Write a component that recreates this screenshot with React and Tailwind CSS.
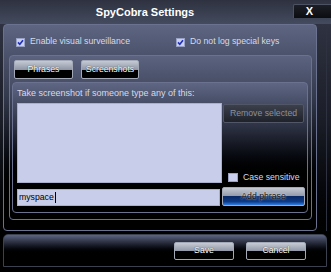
import React from "react";

function Check({ checked, w = "w-[9px]", h = "h-[9px]" }) {
  return (
    <div className={`${w} ${h} shrink-0 bg-[#c9cfec] border border-[#9aa2c4] flex items-center justify-center`}>
      {checked && (
        <svg width="7" height="7" viewBox="0 0 7 7">
          <path d="M1 3.4 L2.8 5.3 L6 1.3" fill="none" stroke="#1f2fbf" strokeWidth="1.6" />
        </svg>
      )}
    </div>
  );
}

function Btn({ children, className = "" }) {
  return (
    <div
      className={`flex items-center justify-center rounded-[2px] border border-[#a3a9b6] bg-[linear-gradient(to_bottom,#c5cad4_0%,#9197a7_50%,#000_50%,#000_100%)] text-white text-[8.7px] [text-shadow:0_0_1px_#000] ${className}`}
    >
      {children}
    </div>
  );
}

export default function App() {
  return (
    <div className="relative w-[331px] h-[272px] overflow-hidden bg-linear-to-b from-[#343848] via-[#1a1d26] via-45% to-black font-['Liberation_Sans',Arial,sans-serif]">
      {/* title bar */}
      <div className="flex h-[24px] bg-linear-to-b from-[#2e3240] to-[#444b5f]">
        <div className="flex-1 flex items-center justify-center pr-[3px] text-white font-bold text-[11px]">
          SpyCobra Settings
        </div>
        <div className="mt-[4px] w-[38px] h-[14px] rounded-tl-[2px] border-t border-l border-[#4c5262] bg-linear-to-b from-[#1c1f27] to-[#0c0d11] flex items-center justify-center pr-[6px] text-white font-bold text-[11px]">
          X
        </div>
      </div>

      {/* main panel */}
      <div className="flex">
        <div className="ml-[3px] w-[314px] h-[207px] rounded-[4px] border border-[#6a7290] bg-linear-to-b from-[#5d6582] via-[#343a4d] via-35% to-black to-85%">
          <div className="pt-[12px] pl-[12px] flex items-center h-[22px] text-[8.7px] text-[#d6dae6]">
            <div className="w-[160px] flex items-center gap-[5px]">
              <Check checked />
              <span>Enable visual surveillance</span>
            </div>
            <div className="flex items-center gap-[5px]">
              <Check checked />
              <span>Do not log special keys</span>
            </div>
          </div>

          {/* group */}
          <div className="ml-[5px] mt-[8px] w-[303px] h-[165px] rounded-[4px] border border-[#6a7290] bg-linear-to-b from-[#5b6380] via-[#2e3344] via-40% to-black to-85%">
            <div className="pt-[4px] pl-[4px] flex gap-[8px]">
              <Btn className="w-[59px] h-[19px]">Phrases</Btn>
              <Btn className="w-[58px] h-[19px]">Screenshots</Btn>
            </div>

            <div className="mt-[3px] ml-[2px] w-[296px] h-[131px] rounded-[4px] border border-[#6a7290] bg-linear-to-b from-[#5e6684] via-[#2b3041] via-35% to-black to-75% pl-[4px]">
              <div className="h-[20px] leading-[20px] text-[9px] text-[#d6dae6]">
                Take screenshot if someone type any of this:
              </div>
              <div className="flex">
                <div className="w-[205px] h-[80px] bg-[#c8cde9] border border-[#aab0cc]" />
                <div className="ml-[1px] w-[82px] flex flex-col">
                  <div className="mt-[1px] w-[81px] h-[19px] rounded-[2px] border border-[#515767] bg-linear-to-b from-[#3c404c] to-[#1f2229] flex items-center justify-center text-[8.7px] text-[#8b909c]">
                    Remove selected
                  </div>
                  <div className="mt-[48px] ml-[5px] flex items-center gap-[5px] text-[8.7px] text-[#d6dae6]">
                    <Check w="w-[10px]" h="h-[9px]" />
                    <span>Case sensitive</span>
                  </div>
                </div>
              </div>
              <div className="mt-[3px] flex items-end gap-[2px]">
                <div className="w-[203px] h-[17px] bg-[#c8cde9] border border-[#aab0cc] flex items-center pl-[1px] text-[8.7px] text-black">
                  <span>myspace</span>
                  <span className="ml-[1px] w-[1px] h-[11px] bg-black" />
                </div>
                <div className="w-[83px] h-[19px] rounded-[2px] border border-[#a3a9b6] bg-[linear-gradient(to_bottom,#c5cad4_0%,#9197a7_50%,#082a66_50%,#0d3a86_80%,#2f80e6_100%)] flex items-center justify-center text-[8.7px] text-[#111] [text-shadow:0_0_2px_#fff]">
                  Add phrase
                </div>
              </div>
            </div>
          </div>
        </div>
        <div className="ml-[9px] mt-[2px] w-[1px] h-[205px] bg-[#2e3240]" />
      </div>

      {/* bottom bar */}
      <div className="mt-[3px] ml-[3px] w-[324px] h-[33px] rounded-t-[5px] border border-[#3c4150] bg-linear-to-b from-[#5d6583] to-black to-60% flex justify-end items-start pt-[7px] pr-[20px] gap-[12px]">
        <Btn className="w-[60px] h-[18px]">Save</Btn>
        <Btn className="w-[60px] h-[18px]">Cancel</Btn>
      </div>
    </div>
  );
}
